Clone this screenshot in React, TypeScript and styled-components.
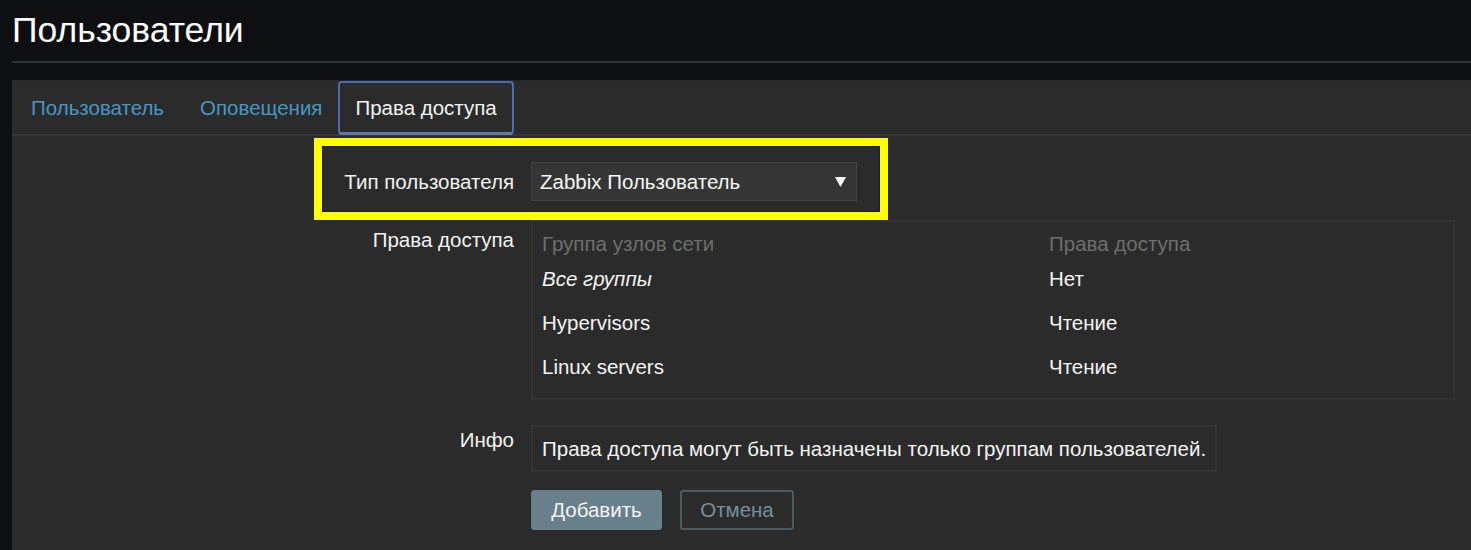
import React from "react"
import styled, { createGlobalStyle } from "styled-components"

const Global = createGlobalStyle`
  html, body {
    margin: 0;
    padding: 0;
    background: #0e0f11;
    font-family: "Liberation Sans", Arial, sans-serif;
    color: #f2f2f2;
  }
  body {
    overflow: hidden;
  }
`

type Permission = { group: string; access: string; all?: boolean }

const permissions: Permission[] = [
  { group: "Все группы", access: "Нет", all: true },
  { group: "Hypervisors", access: "Чтение" },
  { group: "Linux servers", access: "Чтение" },
]

const tabs = ["Пользователь", "Оповещения", "Права доступа"]

export default function App() {
  return (
    <>
      <Global />
      <S.Page>
        <S.Header>
          <S.Title>Пользователи</S.Title>
        </S.Header>
        <S.Panel>
          <S.TabBar>
            {tabs.map((t, i) => (
              <S.Tab key={t} active={i === 2}>
                {t}
              </S.Tab>
            ))}
          </S.TabBar>
          <S.Form>
            <S.Row highlighted>
              <S.Highlight />
              <S.Label center>Тип пользователя</S.Label>
              <S.Select>
                <span>Zabbix Пользователь</span>
                <S.Arrow width="11" height="10" viewBox="0 0 11 10">
                  <polygon points="0,0 11,0 5.5,10" fill="#ffffff" />
                </S.Arrow>
              </S.Select>
            </S.Row>
            <S.Row>
              <S.Label>Права доступа</S.Label>
              <S.TableBox>
                <S.Table>
                  <thead>
                    <tr>
                      <S.Th>Группа узлов сети</S.Th>
                      <S.Th>Права доступа</S.Th>
                    </tr>
                  </thead>
                  <tbody>
                    {permissions.map((p) => (
                      <tr key={p.group}>
                        <S.Td italic={p.all}>{p.group}</S.Td>
                        <S.Td>{p.access}</S.Td>
                      </tr>
                    ))}
                  </tbody>
                </S.Table>
              </S.TableBox>
            </S.Row>
            <S.Row spaced>
              <S.Label top>Инфо</S.Label>
              <S.Info>Права доступа могут быть назначены только группам пользователей.</S.Info>
            </S.Row>
            <S.Row>
              <span />
              <S.Buttons>
                <S.Button primary>Добавить</S.Button>
                <S.Button>Отмена</S.Button>
              </S.Buttons>
            </S.Row>
          </S.Form>
        </S.Panel>
      </S.Page>
    </>
  )
}

const S = {
  Page: styled.div`
    padding-left: 12px;
    height: 550px;
    display: flex;
    flex-direction: column;
  `,
  Header: styled.div`
    flex-shrink: 0;
    height: 61px;
    border-bottom: 2px solid #323437;
    display: flex;
    align-items: center;
    margin-bottom: 17px;
  `,
  Title: styled.h1`
    margin: 0;
    font-size: 35.5px;
    font-weight: normal;
    color: #ffffff;
    line-height: 1;
  `,
  Panel: styled.div`
    flex: 1;
    background: #2b2b2b;
    border-top: 1px solid #262626;
  `,
  TabBar: styled.div`
    display: flex;
    height: 53px;
    border-bottom: 2px solid #383838;
    padding-left: 1px;
  `,
  Tab: styled.div<{ active?: boolean }>`
    display: flex;
    align-items: center;
    padding: 0 ${({ active }) => (active ? "15px" : "18px")};
    font-size: 20.5px;
    color: ${({ active }) => (active ? "#f4f4f4" : "#4796c4")};
    border: ${({ active }) => (active ? "2px solid #4a6cb0" : "none")};
    border-bottom: ${({ active }) => (active ? "3px solid #5f7aa6" : "none")};
    border-radius: 4px;
    height: ${({ active }) => (active ? "54px" : "auto")};
    box-sizing: border-box;
    margin-left: ${({ active }) => (active ? "-2px" : "0")};
  `,
  Form: styled.div`
    padding-top: 26px;
    display: flex;
    flex-direction: column;
  `,
  Row: styled.div<{ highlighted?: boolean; spaced?: boolean }>`
    position: relative;
    display: grid;
    grid-template-columns: 502px auto;
    column-gap: 17px;
    justify-content: start;
    margin-bottom: ${({ highlighted, spaced }) => (highlighted ? "19px" : spaced ? "18px" : "25px")};
  `,
  Highlight: styled.div`
    position: absolute;
    left: 302px;
    top: -24px;
    width: 574px;
    height: 82px;
    box-sizing: border-box;
    border: 8px solid #ffff00;
    box-shadow: inset 0 0 0 1px #1c1c30;
    pointer-events: none;
  `,
  Label: styled.div<{ center?: boolean; top?: boolean }>`
    font-size: 20.5px;
    color: #f2f2f2;
    text-align: right;
    align-self: ${({ center }) => (center ? "center" : "start")};
    padding-top: ${({ center, top }) => (center ? "0" : top ? "3px" : "8px")};
  `,
  Select: styled.div`
    width: 326px;
    height: 39px;
    box-sizing: border-box;
    background: #353535;
    border: 1px solid #454545;
    display: flex;
    align-items: center;
    justify-content: space-between;
    padding: 0 10px 0 8px;
    font-size: 20.5px;
    color: #f6f6f6;
  `,
  Arrow: styled.svg`
    display: block;
  `,
  TableBox: styled.div`
    width: 924px;
    height: 180px;
    box-sizing: border-box;
    border: 2px solid #333333;
    padding: 9px 9px 0;
  `,
  Table: styled.table`
    border-collapse: collapse;
    width: 100%;
    font-size: 20.5px;
  `,
  Th: styled.th`
    text-align: left;
    font-weight: normal;
    color: #6e6e6e;
    height: 26px;
    padding: 0;
    &:first-child {
      width: 507px;
    }
  `,
  Td: styled.td<{ italic?: boolean }>`
    height: 44px;
    padding: 0;
    color: #f4f4f4;
    font-style: ${({ italic }) => (italic ? "italic" : "normal")};
  `,
  Info: styled.div`
    height: 47px;
    box-sizing: border-box;
    border: 2px solid #333333;
    padding: 0 9px;
    display: flex;
    align-items: center;
    font-size: 20.5px;
    color: #f4f4f4;
    white-space: nowrap;
  `,
  Buttons: styled.div`
    display: flex;
    gap: 18px;
  `,
  Button: styled.button<{ primary?: boolean }>`
    height: 40px;
    box-sizing: border-box;
    padding: 0 16px;
    font-family: "Liberation Sans", Arial, sans-serif;
    font-size: 20.5px;
    border-radius: 3px;
    background: ${({ primary }) => (primary ? "#687f8c" : "transparent")};
    color: ${({ primary }) => (primary ? "#f4f4f4" : "#76909c")};
    border: ${({ primary }) => (primary ? "1px solid #687f8c" : "2px solid #4b5a64")};
    min-width: ${({ primary }) => (primary ? "131px" : "114px")};
  `,
}
